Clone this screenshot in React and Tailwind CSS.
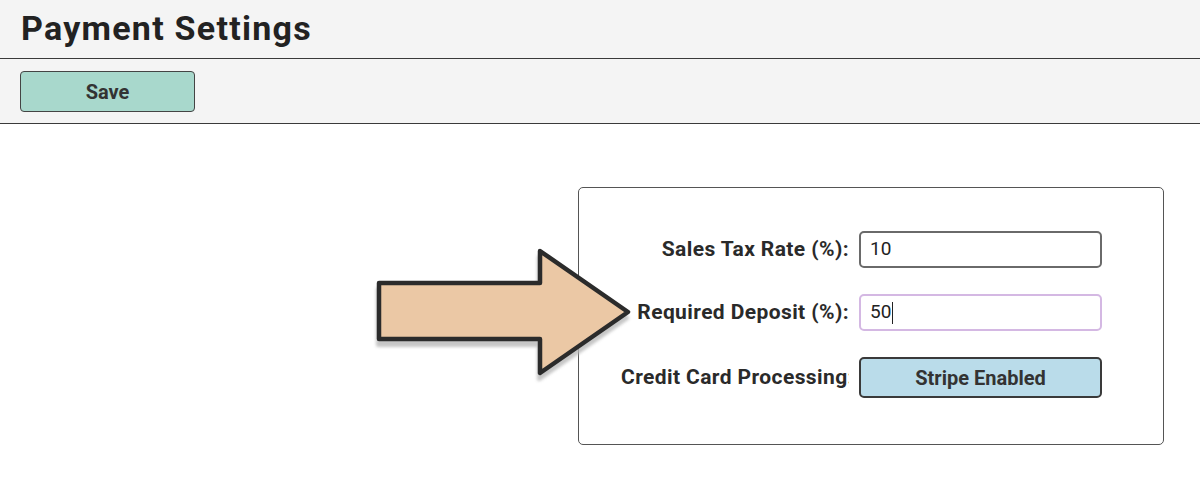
import React from "react";

export default function App() {
  return (
    <div className="relative w-[1200px] h-[490px] bg-white overflow-hidden" style={{ fontFamily: "Roboto, 'Liberation Sans', sans-serif" }}>
      <div className="bg-[#f4f4f4]">
        <div className="h-[59px] flex items-center px-[21px] border-b border-[#3a3a3a]">
          <h1 className="text-[34px] font-bold text-[#222] leading-none tracking-[1.25px] mt-[-2px]">Payment Settings</h1>
        </div>
        <div className="h-[65px] flex items-center px-[20px] border-b border-[#3a3a3a]">
          <button className="w-[175px] h-[41px] bg-[#a8d8cc] border border-[#444] rounded-[4px] text-[20px] font-bold text-[#333] mt-[1px]">
            Save
          </button>
        </div>
      </div>

      <div className="flex justify-end pr-[36px] pt-[63px]">
        <div className="w-[586px] h-[258px] border border-[#555] rounded-[5px] bg-white flex flex-col pt-[43px] pl-[42px] gap-[26px]">
          <div className="flex items-center">
            <div className="w-[228px] text-right text-[21px] tracking-[0.4px] font-bold text-[#2a2a2a] whitespace-nowrap overflow-hidden">Sales Tax Rate (%):</div>
            <div className="ml-[10px] w-[243px] h-[37px] border-2 border-[#6a6a6a] rounded-[5px] flex items-center px-[9px] text-[19px] text-[#222]">10</div>
          </div>
          <div className="flex items-center">
            <div className="w-[228px] text-right text-[21px] tracking-[0.4px] font-bold text-[#2a2a2a] whitespace-nowrap overflow-hidden">Required Deposit (%):</div>
            <div className="ml-[10px] w-[243px] h-[37px] border-2 border-[#d4b8e3] rounded-[5px] flex items-center px-[9px] text-[19px] text-[#222]">
              50<span className="inline-block w-[1px] h-[22px] bg-[#222] ml-[1px]"></span>
            </div>
          </div>
          <div className="flex items-center">
            <div className="w-[228px] text-[21px] tracking-[0.4px] font-bold text-[#2a2a2a] whitespace-nowrap overflow-hidden">Credit Card Processing:</div>
            <button className="ml-[10px] w-[243px] h-[41px] bg-[#badcea] border-2 border-[#3a3a3a] rounded-[5px] text-[20px] font-bold text-[#333]">Stripe Enabled</button>
          </div>
        </div>
      </div>

      <svg className="absolute left-0 top-0 pointer-events-none" width="1200" height="490">
        <defs>
          <filter id="sh" x="-20%" y="-20%" width="140%" height="140%">
            <feGaussianBlur stdDeviation="1.5" />
          </filter>
        </defs>
        <path d="M379 283 L540 283 L540 251 L628 312 L540 373 L540 339 L379 339 Z" transform="translate(-1 6)" fill="#b8b8b8" stroke="#b8b8b8" strokeWidth="4" strokeLinejoin="round" filter="url(#sh)" opacity="0.8" />
        <path d="M379 283 L540 283 L540 251 L628 312 L540 373 L540 339 L379 339 Z" fill="#ebc8a5" stroke="#2b2b2b" strokeWidth="4.5" strokeLinejoin="round" />
      </svg>
    </div>
  );
}
